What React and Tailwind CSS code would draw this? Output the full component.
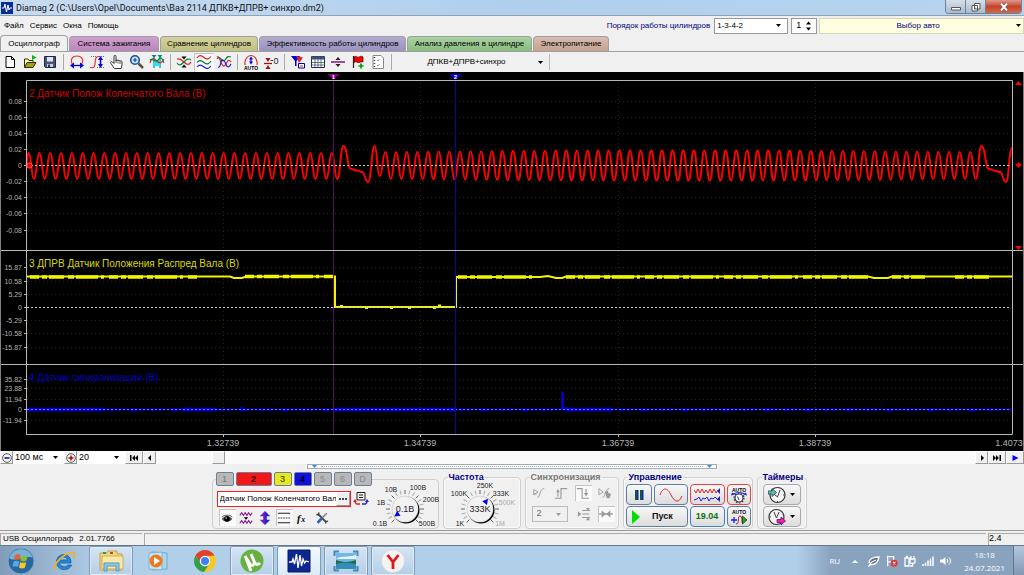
import React from 'react';

const TABS = [
    { label: 'Осциллограф', cls: 'w-[68px] h-4 bg-[#f0f0f0]' },
    { label: 'Система зажигания', cls: 'w-[90px] h-[15px] bg-gradient-to-b from-[#cfa0cf] to-[#bb85bb]' },
    { label: 'Сравнение цилиндров', cls: 'w-[98px] h-[15px] bg-gradient-to-b from-[#d3d3a0] to-[#bfbf7e]' },
    { label: 'Эффективность работы цилиндров', cls: 'w-[147px] h-[15px] bg-gradient-to-b from-[#b3abd0] to-[#9a92bd]' },
    { label: 'Анализ давления в цилиндре', cls: 'w-[125px] h-[15px] bg-gradient-to-b from-[#a9d3a2] to-[#88bd80]' },
    { label: 'Электропитание', cls: 'w-[76px] h-[15px] bg-gradient-to-b from-[#d8bdb0] to-[#c3a292]' },
];

const V_GRID = [223, 420, 618, 815];

const Y_LABELS = [
    [101, '0.08'], [117, '0.06'], [133, '0.04'], [149, '0.02'], [165, '0'], [181, '-0.02'], [197, '-0.04'], [213, '-0.06'], [230, '-0.08'],
    [267, '15.87'], [281, '10.58'], [294, '5.29'], [307, '0'], [320, '-5.29'], [333, '-10.58'], [347, '-15.87'],
    [379, '35.82'], [388, '23.88'], [399, '11.94'], [409, '0'], [420, '-11.94'],
];

// Peaks and troughs of the crankshaft signal, 58 teeth and a two-tooth gap
function crankExtrema() {
    const pts = [[26, 166]];
    for (let i = 0; i <= 28; i++) {
        const x = 28.6 + i * 10.83;
        pts.push([x, 153], [x + 5.3, 179]);
    }
    pts.push([343.5, 146], [351, 169], [357, 170.5], [362, 172], [368, 182], [374.7, 146], [379.6, 176]);
    for (let i = 0; i <= 55; i++) {
        const x = 385.5 + i * 10.633;
        const swell = Math.sin((Math.PI * i) / 55) * 1.5;
        pts.push([x, 152 - swell], [x + 5.3, 179 + swell]);
    }
    pts.push([981.5, 146], [989, 169], [994, 170.5], [1000, 172], [1006, 182], [1012, 148]);
    return pts;
}

function smoothPath(pts) {
    let d = `M${pts[0][0]} ${pts[0][1]}`;
    for (let i = 1; i < pts.length; i++) {
        const [x0, y0] = pts[i - 1];
        const [x1, y1] = pts[i];
        const m = ((x0 + x1) / 2).toFixed(1);
        d += `C${m} ${y0} ${m} ${y1.toFixed(1)} ${x1.toFixed(1)} ${y1.toFixed(1)}`;
    }
    return d;
}

function Chart() {
    return (
        <svg viewBox="0 72 1024 379" className="block w-full bg-black" fontFamily="Liberation Sans, Arial, sans-serif">
            <g stroke="#26260a" strokeDasharray="1 3">
                {Y_LABELS.map(([y]) => <path key={y} d={`M27 ${y + 0.5}H1011`} />)}
                {V_GRID.map((x) => <path key={x} d={`M${x + 0.5} 83V434`} />)}
            </g>

            <path d={smoothPath(crankExtrema())} fill="none" stroke="#ff0000" strokeWidth="2" />
            <path d="M27 276.5H230L234 278H242L246 276.5H335V307H456V277H540L548 276L556 278H562L566 276.5H868L874 278H888L892 276.5H1012" fill="none" stroke="#f4f400" strokeWidth="2" />
            <path d="M30 277H200M245 276.5H333M458 277H536M566 277H868M892 277H925M955 277H990" stroke="#f4f400" strokeWidth="3.5" strokeDasharray="9 3 5 2 15 4 6 2 22 3 3 5" />
            <path d="M340 306.5H343M365 307.5H368M390 307.5H393M408 307.5H411M433 307.5H436M438 306H441" stroke="#f4f400" strokeWidth="3" />
            <path d="M27 409.5H1012" stroke="#0000f0" strokeWidth="1.6" />
            <path d="M27 409.5H105M182 409.5H216M333 409.5H455M566 409.5H612" stroke="#0000f0" strokeWidth="3.5" strokeDasharray="11 1 6 1" />
            <path d="M110 410H180M220 410H330M460 410H560M620 410H1010" stroke="#0000f0" strokeWidth="2.5" strokeDasharray="3 5 2 11 6 4 1 9" />
            <path d="M241.5 409V406" stroke="#0000ff" strokeWidth="1.5" />
            <path d="M562.5 410V392M563 408.5H569" stroke="#0000ff" strokeWidth="2" />
            <g stroke="#c8c8c8" strokeDasharray="2 2">
                <path d="M27 165.5H1011" />
                <path d="M27 307.5H1011" />
                <path d="M27 409.5H1011" strokeOpacity=".6" />
            </g>
            <path d="M333.5 80V434" stroke="#5a0a60" />
            <path d="M455.5 80V434" stroke="#1400a0" />

            <g stroke="#b8b8b8" fill="none">
                <path d="M26.5 434.5V80.5H1012.5V434.5H26" />
                <path d="M0 250.5H1024M0 364.5H1024" />
                <path d="M.5 72V451M1023.5 72V451" stroke="#808080" />
                {Y_LABELS.map(([y]) => <path key={y} d={`M24 ${y + 0.5}H26`} />)}
                {V_GRID.map((x) => <path key={x} d={`M${x + 0.5} 434V437`} />)}
            </g>
            <g fontSize="7" fill="#b4b4b4" textAnchor="end">
                {Y_LABELS.map(([y, t]) => <text key={y} x="22" y={y + 3}>{t}</text>)}
            </g>
            <g fontSize="9" fill="#b4b4b4" textAnchor="middle">
                <text x="223" y="446">1.32739</text>
                <text x="420" y="446">1.34739</text>
                <text x="618" y="446">1.36739</text>
                <text x="815" y="446">1.38739</text>
                <text x="1009" y="446">1.4073</text>
            </g>
            <g fontSize="10">
                <text x="29" y="97" fill="#d00000">2 Датчик Полож Коленчатого Вала (В)</text>
                <text x="29" y="267" fill="#d8d800">3 ДПРВ Датчик Положения Распред Вала (В)</text>
                <text x="29" y="381" fill="#0000c0">4 Датчик синхронизации (В)</text>
            </g>

            <path d="M327.5 74H339.5L333.5 80Z" fill="#800080" />
            <path d="M449.5 74H461.5L455.5 80Z" fill="#0000ff" />
            <g fontSize="6" fontWeight="bold" fill="#fff" textAnchor="middle">
                <text x="333.5" y="79">1</text>
                <text x="455.5" y="79">2</text>
            </g>
            <circle cx="29.5" cy="165.5" r="2.7" fill="#ff0000" stroke="#ff8080" strokeWidth=".6" />
            <path d="M1015 85L1018.5 81L1022 85ZM1018.5 162L1021.5 165L1018.5 168L1015.5 165ZM1015 246H1022L1018.5 250Z" fill="#ff0000" />
        </svg>
    );
}

/* ---------- small drawings ---------- */

function Svg({ size = 'size-4', children, box = '0 0 16 16' }) {
    return <svg viewBox={box} className={`${size} shrink-0`} fill="none" aria-hidden="true">{children}</svg>;
}

function Down({ color = '#000' }) {
    return <svg viewBox="0 0 5 3" className="w-[5px] h-[3px] shrink-0" aria-hidden="true"><path d="M0 0H5L2.5 3Z" fill={color} /></svg>;
}

const TOOL_GROUPS = [
    [
        ['Новый', <Svg><path d="M4 2.5H9.5L12.5 5.5V13.5H4Z" fill="#fff" stroke="#000" /><path d="M9.5 2.5V5.5H12.5" stroke="#000" /></Svg>],
        ['Открыть', <Svg><path d="M2.5 13V5H6L7 6.5H11V8" fill="#ffffa0" stroke="#303000" /><path d="M2.5 13.5L5 8.5H14L11 13.5Z" fill="#a0a020" stroke="#303000" /><path d="M10 1L14.5 3.5L10 6Z" fill="#00c000" /></Svg>],
        ['Сохранить', <Svg><path d="M2.5 2.5H13.5V13.5H3.5L2.5 12.5Z" fill="#4a5578" stroke="#202840" /><path d="M5 3H11V7.5H5Z" fill="#e0e4f0" /><path d="M5 10H11V13H5Z" fill="#c8ccd8" /><path d="M6 10.5H8V13H6Z" fill="#303850" /></Svg>],
    ],
    [
        ['Масштаб по X', <Svg><path d="M3.5 10.5C.5 5 4 2 8 2S15.5 5 12.5 10.5" stroke="#f03030" strokeWidth="1.2" /><path d="M3 11.5H13" stroke="#0000e0" strokeWidth="1.3" /><path d="M1 11.5L5 8.5V14.5ZM15 11.5L11 8.5V14.5Z" fill="#0000e0" /></Svg>],
        ['Масштаб по Y', <Svg><path d="M1 13.5H4C8 13 4 3 9 2.5H10" stroke="#f03030" strokeWidth="1.2" /><path d="M2 2.5H7M8 13.5H15M10 2.5H15" stroke="#666" strokeDasharray="1 1" /><path d="M11.5 4V12" stroke="#0000e0" strokeWidth="1.5" /><path d="M11.5 2L14 6H9ZM11.5 14L14 10H9Z" fill="#0000e0" /></Svg>],
        ['Перемещение', <Svg><path d="M5 14L2 9.5C1 8 2.5 7 3.5 8L5 9.5V2.5C5 1 7 1 7 2.5V7C7 5.5 9 5.5 9 7C9 6 11 6 11 7.5C11 6.5 13 6.5 13 8V11L12 14.5H5.5Z" fill="#fff" stroke="#202020" strokeWidth=".9" /><path d="M7 7V9M9 7.5V9.5M11 8V10" stroke="#202020" strokeWidth=".8" /></Svg>],
        ['Лупа', <Svg><circle cx="6" cy="6" r="4.3" fill="#c8e4ff" stroke="#205090" strokeWidth="1.6" /><path d="M4 6H8M6 4V8" stroke="#1040c0" strokeWidth="1.2" /><path d="M9.5 9.5L14 14" stroke="#5a5040" strokeWidth="2.5" /></Svg>],
        ['Маркеры', <Svg><path d="M5 3V14M11 3V14" stroke="#00b8c8" strokeWidth="1.5" /><path d="M5 6H11V12H5Z" fill="#30e0e8" /><path d="M1 9C3 3 5 4 8 7S13 9 15 5" stroke="#e02020" strokeWidth="1.1" /><path d="M1 6C4 3 6 10 9 6S13 4 15 9" stroke="#008030" strokeWidth="1.1" /><path d="M2.5 1H7.5L5 4ZM8.5 1H13.5L11 4Z" fill="#008890" /></Svg>],
    ],
    [
        ['Сжать', <Svg><path d="M1 5C4 4 6 6 8 8S13 12 15 8" stroke="#e02020" strokeWidth="1.2" /><path d="M1 9C3 12 5 11 8 8S12 4 15 6" stroke="#008030" strokeWidth="1.2" /><path d="M8 5.5L5.5 2.5H10.5ZM8 10.5L5.5 13.5H10.5Z" fill="#000" /></Svg>],
        ['Разнести', <Svg><path d="M1 4C3 1 5 1 8 3.5S13 5 15 2.5" stroke="#e02020" strokeWidth="1.2" /><path d="M1 8.5C3 6 5 6 8 8.5S13 10 15 7" stroke="#008030" strokeWidth="1.2" /><path d="M1 13C3 10.5 5 10.5 8 13S13 14.5 15 12" stroke="#2020f0" strokeWidth="1.2" /></Svg>, true],
        ['Наложить', <Svg><path d="M1 5C4 0 6 10 9 6S12 2 15 3" stroke="#008030" strokeWidth="1.2" /><path d="M1 3C4 1 5 13 8 12S11 3 15 8" stroke="#e02020" strokeWidth="1.2" /><path d="M2 13C5 15 4 5 7 6S10 13 12 13S14 11 15 10" stroke="#2020f0" strokeWidth="1.2" /></Svg>],
    ],
    [
        ['Авто', <Svg><path d="M2 11C1 5 5 1.5 8 1.5S15 5 14 11" stroke="#e02020" strokeWidth="1.1" /><path d="M8 4V9" stroke="#0000d0" strokeWidth="1.2" /><path d="M8 2.5L10 5.5H6ZM8 10.5L10 7.5H6Z" fill="#0000d0" /><text x="8" y="15.5" textAnchor="middle" fontSize="5" fontWeight="bold" fill="#000" fontFamily="Liberation Sans">AUTO</text></Svg>],
        ['Ноль', <Svg><path d="M1 9.5H9" stroke="#a01010" strokeWidth="1.3" /><path d="M2.5 4H7.5L5 8ZM2.5 15H7.5L5 11Z" fill="#a01010" /><path d="M7.5 6.5H10" stroke="#444" /><text x="10.5" y="9.5" fontSize="9" fill="#222" fontFamily="Liberation Sans">0</text></Svg>],
    ],
    [
        ['Фильтр', <Svg><path d="M1 2H10L6.5 7V12H5V7Z" fill="#0000e0" /><path d="M6 2L13 3.5L9 9Z" fill="#e02020" /><path d="M8.5 9.5H14.5V14H8.5Z" fill="#fff" stroke="#0000a0" /><path d="M10 12H13" stroke="#e02020" /></Svg>],
        ['Таблица', <Svg><path d="M1.5 2.5H14.5V13.5H1.5Z" fill="#fff" stroke="#203050" /><path d="M1.5 4H14.5" stroke="#405880" strokeWidth="3" /><path d="M5 3V13M8 3V13M11 3V13M2 8.5H14M2 11H14" stroke="#304060" strokeWidth=".7" /></Svg>],
        ['Разделить', <Svg><path d="M1 8H15" stroke="#800080" strokeWidth="1.4" /><path d="M8 3L10.5 6H5.5ZM8 13L10.5 10H5.5Z" fill="#222" /></Svg>],
        ['Флаг', <Svg><path d="M3.5 2V14" stroke="#222" strokeWidth="1.2" /><path d="M4 3C6 1 7 4 9 3S12 2 13 3V8C11 7 10 9 8 8.5S6 7 4 8.5Z" fill="#f00000" stroke="#600" strokeWidth=".7" /><path d="M11 9.5V14.5M8.5 12H13.5" stroke="#00a000" strokeWidth="1.7" /></Svg>],
        ['Отчёт', <Svg><path d="M3 1.5H11L13.5 4V14.5H3Z" fill="#fff" stroke="#888" /><path d="M4.5 3V14" stroke="#444" strokeDasharray="1 2" strokeWidth="1.5" /><path d="M7 6L8 7L9.5 5M7 11L8 12L9.5 10" stroke="#888" strokeWidth=".8" /></Svg>],
    ],
];

const CHANNELS = [
    ['1', 'w-[18px] bg-[#b8b8b8] text-[#777]'],
    ['2', 'w-9 bg-[#f01818] text-[#300] font-bold'],
    ['3', 'w-[18px] bg-[#e8e820] text-[#330]'],
    ['4', 'w-[18px] bg-[#1010e0] text-black font-bold'],
    ['5', 'w-[18px] bg-[#b8b8b8] text-[#888]'],
    ['6', 'w-[18px] bg-[#b8b8b8] text-[#888]'],
    ['D', 'w-[18px] bg-[#b8b8b8] text-[#888]'],
];

const CHANNEL_TOOLS = [
    ['Видимость', <Svg size="size-3.5"><path d="M2 9C5 5 11 5 14 9C11 13 5 13 2 9Z" fill="#555" /><circle cx="8" cy="9" r="3.2" fill="#000" /><path d="M2 7C5 4 11 4 14 7" stroke="#444" /><circle cx="7" cy="8" r=".8" fill="#fff" /></Svg>, true],
    ['Инверсия', <Svg size="size-3.5"><path d="M1 5L3 2L5 5L7 2L9 5L11 2L13 5L15 2M1 14L3 11L5 14L7 11L9 14L11 11L13 14L15 11" stroke="#902090" strokeWidth="1.3" /><path d="M5.5 7H10.5L8 10Z" fill="#000" /></Svg>],
    ['Смещение', <Svg size="size-3.5"><path d="M8 0L14 6H10V10H14L8 16Z" fill="#2020e0" /><path d="M8 0L2 6H6V10H2L8 16Z" fill="#7020b0" /></Svg>],
    ['Линии', <Svg size="size-3.5"><path d="M1 2.5H15M1 13.5H15" stroke="#222" strokeWidth="1.2" /><path d="M1 8H15" stroke="#222" strokeDasharray="2 1" /></Svg>, true],
    ['Функция', <Svg size="size-3.5"><text x="1" y="12" fontSize="12" fontStyle="italic" fontWeight="bold" fontFamily="Liberation Serif" fill="#000">f</text><text x="6" y="13" fontSize="9" fontStyle="italic" fontWeight="bold" fontFamily="Liberation Serif" fill="#000">x</text></Svg>],
    ['Настройка', <Svg size="size-3.5"><path d="M3 3L13 13" stroke="#444" strokeWidth="2.2" /><path d="M13.5 2.5L8 8" stroke="#777" strokeWidth="1.6" /><path d="M8 8L3 13.5" stroke="#3060b0" strokeWidth="3" /><path d="M1.5 4L4 4.5L4.5 1.5M12 14.5L12.5 12L15 11.5" stroke="#444" strokeWidth="1.5" /></Svg>],
];

function Knob({ value, angle, labels, label }) {
    const ticks = Array.from({ length: 19 }, (_, i) => -135 + i * 15);
    return (
        <svg viewBox="0 6 72 42" className="w-[72px] h-[42px] shrink-0 overflow-visible" fontFamily="Liberation Sans, Arial, sans-serif" role="img" aria-label={label}>
            {ticks.map((a, i) => <path key={a} d="M36 14V10" stroke={i % 3 ? '#aaa' : '#555'} strokeWidth=".9" transform={`rotate(${a} 36 29)`} />)}
            <circle cx="37" cy="30" r="13.5" fill="#000" />
            <circle cx="36" cy="29" r="13.3" fill="#d0d0d0" />
            <circle cx="36" cy="29" r="12.6" fill="#f2f2f2" />
            <path d="M36 16L39 21.5H33Z" fill="#0000f0" transform={`rotate(${angle} 36 29)`} />
            <text x="36" y="32" fontSize="9" textAnchor="middle" fill="#222">{value}</text>
            <g fontSize="7" textAnchor="middle">
                {labels.map(([x, y, t, dim]) => <text key={t} x={x} y={y} fill={dim ? '#aaa' : '#222'}>{t}</text>)}
            </g>
        </svg>
    );
}

const RANGE_LABELS = [[11, 46, '0.1В'], [12, 25, '1В'], [22, 12, '10В'], [49, 10, '100В'], [62, 22, '200В'], [58, 46, '500В']];
const FREQ_LABELS = [[16, 46, '1K'], [15, 16, '100K'], [41, 8, '250K'], [57, 16, '333K'], [63, 25, '500K', true], [56, 46, '1M', true]];

const SYNC_TOP = [
    ['Спад', <Svg size="size-3.5"><path d="M1 9H5M6 13C10 13 8 3 14 3M2 4L7 7L2 10Z" stroke="#999" /></Svg>],
    ['Фронт вверх', <Svg size="size-3.5"><path d="M1 14H8V3H15M4.5 12V5" stroke="#999" strokeWidth="1.3" /><path d="M2.5 7L4.5 3L6.5 7Z" fill="#999" /></Svg>],
    ['Фронт вниз', <Svg size="size-3.5"><path d="M1 3H7V14H15M11.5 3V10" stroke="#999" strokeWidth="1.3" /><path d="M9 8H14L11.5 12Z" fill="#999" /></Svg>, true],
    ['Ручная', <Svg size="size-3.5"><path d="M1 3L6 7L1 10ZM5 13C9 13 7 3 13 3" stroke="#999" /><path d="M8 7L11 5L12 8L15 9L13 14H10Z" fill="#999" /></Svg>],
];

const SYNC_BOTTOM = [
    ['Уровень', <Svg size="size-3.5"><path d="M6 4H15M6 8H14M6 12H15" stroke="#999" strokeWidth="1.3" /><path d="M1 5L5 8L1 11ZM10 1H15L12.5 4ZM10 15H15L12.5 12Z" fill="#999" /></Svg>],
    ['По центру', <Svg size="size-3.5"><path d="M0 8H16" stroke="#999" strokeWidth="1.5" /><path d="M3 4L8 8L3 12ZM13 4L8 8L13 12Z" fill="#999" /></Svg>, true],
];

function Group({ title, className = '', dim, children }) {
    return (
        <fieldset className={`h-[57px] min-w-0 rounded-sm border border-[#cfcfcf] shadow-[inset_0_0_0_1px_#fafafa] ${className}`}>
            <legend className={`ml-1 h-2.5 px-px text-[9px] leading-[10px] font-bold ${dim ? 'text-[#777]' : 'text-[#000080]'}`}>{title}</legend>
            {children}
        </fieldset>
    );
}

function IconButton({ name, icon, on, className = '' }) {
    return (
        <button type="button" aria-label={name} className={`flex items-center justify-center ${on ? 'bg-[#fafafa] shadow-[inset_1px_1px_0_#c4c4c4]' : ''} ${className}`}>
            {icon}
        </button>
    );
}

function Picker({ name, value, className = '', selectClass = '', arrow = '#000' }) {
    return (
        <div className={`grid items-center ${className}`}>
            <select aria-label={name} defaultValue={value} className={`col-start-1 row-start-1 h-full w-full appearance-none outline-none ${selectClass}`}>
                <option>{value}</option>
            </select>
            <span className="pointer-events-none col-start-1 row-start-1 mr-1.5 justify-self-end"><Down color={arrow} /></span>
        </div>
    );
}

function TitleBar() {
    return (
        <div className="flex h-4 items-center bg-gradient-to-r from-[#c8dcf0] via-[#b0cfec] to-[#b8d4ee] border-b border-[#93a2b2]">
            <svg viewBox="0 0 12 12" className="ml-px size-3 shrink-0"><path d="M0 0H12V12H0Z" fill="#0c2aa0" /><path d="M1 6H3L4 2L5.5 10L7 3L8 8L9 6H11" fill="none" stroke="#fff" /></svg>
            <h1 className="ml-[3px] flex-1 whitespace-nowrap font-[Roboto,sans-serif] text-[9px] leading-4 text-[#111]">Diamag 2 (C:\Users\Opel\Documents\Ваз 2114 ДПКВ+ДПРВ+ синхро.dm2)</h1>
            <div className="mr-0.5 flex h-[14px] self-start overflow-hidden rounded-b border border-t-0 border-[#6f8296]">
                <button type="button" aria-label="Свернуть" className="flex w-5 items-center justify-center border-r border-[#6f8296] bg-gradient-to-b from-[#d6e0ea] to-[#a9bbcd]">
                    <Svg size="size-2.5" box="0 0 10 10"><path d="M.5 5.5H9.5V8H.5Z" fill="#fff" stroke="#555" /></Svg>
                </button>
                <button type="button" aria-label="Восстановить" className="flex w-5 items-center justify-center border-r border-[#6f8296] bg-gradient-to-b from-[#d6e0ea] to-[#a9bbcd]">
                    <Svg size="size-2.5" box="0 0 10 10"><path d="M3.5 1.5H9V7H3.5ZM1 3.5H6.5V9H1Z" fill="#fff" stroke="#555" /><path d="M3 5.5H4.5V7H3Z" fill="#555" /></Svg>
                </button>
                <button type="button" aria-label="Закрыть" className="flex w-[35px] items-center justify-center bg-gradient-to-b from-[#dc9a8c] via-[#c6432b] to-[#cf6a4a]">
                    <Svg size="size-2.5" box="0 0 10 10"><path d="M2 1.5L8 8.5M8 1.5L2 8.5" stroke="#633" strokeWidth="3" /><path d="M2 1.5L8 8.5M8 1.5L2 8.5" stroke="#fff" strokeWidth="2" /></Svg>
                </button>
            </div>
        </div>
    );
}

function MenuBar() {
    return (
        <div className="flex h-[19px] items-center">
            <nav className="flex flex-1 gap-1.5 pl-1 text-[8px]">
                {['Файл', 'Сервис', 'Окна', 'Помощь'].map((m) => <button type="button" key={m}>{m}</button>)}
            </nav>
            <span className="mr-1 text-[8px] text-[#000080]">Порядок работы цилиндров</span>
            <Picker name="Порядок работы цилиндров" value="1-3-4-2" className="h-4 w-[74px] border border-[#999] bg-white" selectClass="pl-0.5 text-[8px]" />
            <div className="ml-[3px] flex h-4 w-[26px] items-center border border-[#999] bg-white">
                <input type="text" aria-label="Номер цилиндра" defaultValue="1" className="w-3.5 pl-1 text-[9px] outline-none" />
                <svg viewBox="0 0 5 10" className="h-2.5 w-[5px]"><path d="M0 3.5L2.5 .5L5 3.5ZM0 6.5H5L2.5 9.5Z" /></svg>
            </div>
            <button type="button" className="ml-0.5 flex h-4 w-1/5 items-center border border-[#d8d8b8] bg-[#ffffe0] pr-0.5 text-[8px] text-[#000080]">
                <span className="flex-1">Выбор авто</span>
                <Down />
            </button>
        </div>
    );
}

function Toolbar() {
    return (
        <div className="flex h-[21px] items-center border-t border-[#a0a0a0] bg-[#f0f0f0]">
            {TOOL_GROUPS.map((group, i) => (
                <div key={i} className="flex items-center">
                    {group.map(([name, icon, on]) => <IconButton key={name} name={name} icon={icon} on={on} className="h-[19px] w-5" />)}
                    <span className="mx-[3px] h-4 w-px bg-[#aaa]" />
                </div>
            ))}
            <button type="button" className="flex h-full w-[154px] items-center pr-1.5 text-[8px]">
                <span className="flex-1">ДПКВ+ДПРВ+синхро</span>
                <Down />
            </button>
            <span className="h-4 w-px bg-[#bbb]" />
        </div>
    );
}

const SCROLL_BTN = 'flex h-[13px] items-center justify-center border border-[#999] border-t-white border-l-white bg-[#f0f0f0]';

function ScrollRow() {
    return (
        <div className="flex h-[13px] items-center bg-white text-[9px]">
            <button type="button" aria-label="Уменьшить" className={`${SCROLL_BTN} w-[13px]`}><Svg size="size-2.5" box="0 0 10 10"><circle cx="5" cy="5" r="4.3" fill="#fff" stroke="#555" /><path d="M2.5 5H7.5" stroke="#0000c0" strokeWidth="1.5" /></Svg></button>
            <Picker name="Развёртка" value="100 мс" className="h-[13px] w-[51px]" selectClass="pl-0.5 leading-[13px]" />
            <button type="button" aria-label="Увеличить" className={`${SCROLL_BTN} w-[13px]`}><Svg size="size-2.5" box="0 0 10 10"><circle cx="5" cy="5" r="4.3" fill="#fff" stroke="#555" /><path d="M2.5 5H7.5M5 2.5V7.5" stroke="#c00000" strokeWidth="1.5" /></Svg></button>
            <Picker name="Масштаб" value="20" className="h-[13px] w-12" selectClass="pl-0.5 leading-[13px]" />
            <button type="button" aria-label="В начало" className={`${SCROLL_BTN} w-[18px]`}><Svg size="size-2.5" box="0 0 10 10"><path d="M1 2H2.5V8H1ZM3 5L6 2V8ZM6 5L9 2V8Z" fill="#000" /></Svg></button>
            <button type="button" aria-label="Назад" className={`${SCROLL_BTN} w-[13px]`}><Svg size="size-2" box="0 0 8 8"><path d="M2 4L5 1V7Z" fill="#000" /></Svg></button>
            <div className="h-[13px] flex-1 bg-[#fafafa] pl-[5.5%]">
                <div className={`${SCROLL_BTN} w-[13px]`} />
            </div>
            <button type="button" aria-label="Вперёд" className={`${SCROLL_BTN} w-[13px]`}><Svg size="size-2" box="0 0 8 8"><path d="M6 4L3 1V7Z" fill="#000" /></Svg></button>
            <button type="button" aria-label="В конец" className={`${SCROLL_BTN} w-[18px]`}><Svg size="size-2.5" box="0 0 10 10"><path d="M1 2L4 5L1 8ZM4 2L7 5L4 8ZM7.5 2H9V8H7.5Z" fill="#000" /></Svg></button>
            <button type="button" aria-label="Воспроизвести" className={`${SCROLL_BTN} w-[18px]`}><Svg size="size-2" box="0 0 8 8"><path d="M1.5 1L7.5 4L1.5 7Z" fill="#0000ff" /></Svg></button>
        </div>
    );
}

function ChannelGroup() {
    return (
        <fieldset className="h-[57px] w-[227px] min-w-0 rounded-sm border border-[#cfcfcf]">
            <legend className="ml-[3px] flex h-3.5 gap-0.5">
                {CHANNELS.map(([n, cls]) => (
                    <button type="button" key={n} className={`h-3.5 rounded-xs border border-[#6c8199] text-[9px] leading-3 ${cls}`}>{n}</button>
                ))}
            </legend>
            <div className="flex h-11 pl-1">
                <div className="flex w-[154px] flex-col gap-0.5 pt-[5px]">
                    <div className="flex items-center">
                        <div className="flex h-4 w-[134px] items-center border border-[#f02020] bg-white">
                            <input type="text" aria-label="Имя канала" defaultValue="Датчик Полож Коленчатого Вала" className="min-w-0 flex-1 pl-0.5 text-[8px] outline-none" />
                            <button type="button" aria-label="Выбрать датчик" className="flex h-3.5 w-3.5 items-center justify-center border border-[#999] border-t-white border-l-white bg-[#f0f0f0]">
                                <Svg size="size-2" box="0 0 8 8"><path d="M0 4H2M3 4H5M6 4H8" stroke="#111" strokeWidth="1.5" /></Svg>
                            </button>
                        </div>
                        <IconButton
                            name="Поменять каналы"
                            className="ml-0.5 h-4 w-4"
                            icon={<Svg><path d="M4 1.5H12V9H4Z" fill="#eee" stroke="#222" /><path d="M6 4H10M6 6.5H10" stroke="#222" /><path d="M2 10C2 14 5 13 7 13" stroke="#e02020" strokeWidth="1.5" /><path d="M14 10C14 14 11 13 9 13" stroke="#2020e0" strokeWidth="1.5" /><path d="M0 11L2 8L4 11Z" fill="#e02020" /><path d="M12 11L14 8L16 11Z" fill="#2020e0" /></Svg>}
                        />
                    </div>
                    <div className="flex gap-0.5 pl-0.5">
                        {CHANNEL_TOOLS.map(([name, icon, on]) => <IconButton key={name} name={name} icon={icon} on={on} className="h-[17px] w-[17px]" />)}
                    </div>
                </div>
                <Knob value="0.1В" angle={-125} labels={RANGE_LABELS} label="Диапазон" />
            </div>
        </fieldset>
    );
}

const PANEL_BTN = 'flex h-[21px] items-center justify-center rounded-sm border bg-gradient-to-b from-[#f8f8f8] to-[#dcdcdc]';

function ControlPanel() {
    return (
        <div className="border-b border-[#999] bg-[#f0f0f0]">
            <div className="flex justify-center">
                <div className="flex h-[5px] w-2/5 items-center justify-between border border-[#aaa] bg-white px-1">
                    <svg viewBox="0 0 5 3" className="h-[3px] w-[5px]"><path d="M0 0H5L2.5 3Z" fill="#2090f0" /></svg>
                    <span className="mx-1 flex-1 border-t border-dotted border-[#80bce8]" />
                    <svg viewBox="0 0 5 3" className="h-[3px] w-[5px]"><path d="M0 0H5L2.5 3Z" fill="#2090f0" /></svg>
                </div>
            </div>
            <div className="flex items-start justify-center gap-1 pt-[3px] pr-1.5 pb-px">
                <ChannelGroup />
                <Group title="Частота" className="w-[78px]">
                    <div className="pt-1">
                        <Knob value="333K" angle={38} labels={FREQ_LABELS} label="Частота" />
                    </div>
                </Group>
                <Group title="Синхронизация" dim className="w-[94px]">
                    <div className="flex gap-[5px] pl-[5px] pt-[3px]">
                        {SYNC_TOP.map(([name, icon, on]) => <IconButton key={name} name={name} icon={icon} on={on} className="h-4 w-[17px]" />)}
                    </div>
                    <div className="flex items-center pl-1.5 pt-[5px]">
                        <Picker name="Канал синхронизации" value="2" arrow="#999" className="mr-2 h-4 w-9 border border-[#bbb]" selectClass="pl-1 text-[9px] text-[#666]" />
                        <div className="flex gap-[5px]">
                            {SYNC_BOTTOM.map(([name, icon, on]) => <IconButton key={name} name={name} icon={icon} on={on} className="h-4 w-[17px]" />)}
                        </div>
                    </div>
                </Group>
                <Group title="Управление" className="w-[130px]">
                    <div className="grid grid-cols-[26px_34px_35px_24px] gap-x-0.5 gap-y-px px-0.5 pt-0.5">
                        <button type="button" aria-label="Пауза" className={`${PANEL_BTN} border-[#5e7f9f]`}><Svg size="size-3" box="0 0 12 12"><path d="M2 1H5V11H2ZM7 1H10V11H7Z" fill="#0a6030" /><path d="M4 1H5.5V11H4ZM9 1H10.5V11H9Z" fill="#2020c0" /></Svg></button>
                        <button type="button" aria-label="Синус" className={`${PANEL_BTN} border-[#5e7f9f]`}><svg viewBox="0 0 24 16" className="h-4 w-6" fill="none"><path d="M1 8C4 0 8 0 12 8S20 16 23 9" stroke="#e02020" /></svg></button>
                        <button type="button" aria-label="Два сигнала" className={`${PANEL_BTN} border-[#f04040]`}><svg viewBox="0 0 26 16" className="h-4 w-[26px]" fill="none"><path d="M0 3L2 6L4 2L6 6L8 2L10 6L12 3L14 6L16 2L18 6L20 2L22 6L24 3" stroke="#e02020" /><path d="M0 13L3 12L5 10L7 14L9 11L11 12L13 10L15 14L17 11L19 12L21 10L24 13" stroke="#2020e0" /><path d="M26 1V7L23 4ZM26 9V15L23 12Z" fill="#2020c0" /></svg></button>
                        <button type="button" aria-label="Автонастройка" className={`${PANEL_BTN} border-[#f04040]`}><Svg size="size-[18px]" box="0 0 18 18"><text x="9" y="5.5" fontSize="5" fontWeight="bold" textAnchor="middle" fill="#000" fontFamily="Liberation Sans">AUTO</text><circle cx="9" cy="12" r="4" fill="#fff" stroke="#333" strokeWidth="1.2" /><circle cx="9" cy="12" r="5" stroke="#333" strokeDasharray="1.5 1.6" strokeWidth="1.2" /><path d="M9 14L7.5 10.5" stroke="#2020e0" /><path d="M3 8.5C5 6 13 6 15 8.5" stroke="#2020e0" /><path d="M1 9.5L2 6.5L5 8.5ZM17 9.5L16 6.5L13 8.5Z" fill="#2020e0" /></Svg></button>
                        <button type="button" className={`${PANEL_BTN} col-span-2 gap-3 border-[#5e7f9f] pr-2 text-[9px] font-bold text-[#111]`}>
                            <svg viewBox="0 0 8 14" className="h-3.5 w-2"><path d="M0 0L8 7L0 14Z" fill="#00e000" /></svg>
                            Пуск
                        </button>
                        <button type="button" className={`${PANEL_BTN} border-[#4080d0] text-[9px] font-bold text-[#107010]`}>19.04</button>
                        <button type="button" aria-label="Автопуск" className={`${PANEL_BTN} border-[#5e7f9f]`}><Svg size="size-[18px]" box="0 0 18 18"><text x="9" y="5.5" fontSize="5" fontWeight="bold" textAnchor="middle" fill="#000" fontFamily="Liberation Sans">AUTO</text><path d="M6 16C10 16 7 8 10 8S11 15 13 16" stroke="#a02020" /><path d="M1 12H7M4 9V15" stroke="#2020e0" strokeWidth="1.3" /><path d="M12.5 8L17 12L12.5 16Z" fill="#10b010" stroke="#222" strokeWidth=".7" /></Svg></button>
                    </div>
                </Group>
                <Group title="Таймеры" className="w-[50px]">
                    <div className="flex flex-col gap-px px-[5px] pt-0.5">
                        <button type="button" aria-label="Таймер запуска" className={`${PANEL_BTN} gap-1 border-[#aaa]`}><Svg size="size-[18px]" box="0 0 18 18"><circle cx="9.5" cy="9" r="7.5" fill="#f4f4f4" stroke="#333" strokeWidth="1.2" /><path d="M9.5 11L12 4M9.5 11L6 8M15 9H16M9.5 15V16" stroke="#444" /><path d="M0 5H4V2.5L8.5 6.5L4 10.5V8H0Z" fill="#60b8b8" stroke="#204848" strokeWidth=".8" /></Svg><Down /></button>
                        <button type="button" aria-label="Таймер остановки" className={`${PANEL_BTN} gap-1 border-[#aaa]`}><Svg size="size-[18px]" box="0 0 18 18"><circle cx="8.5" cy="9" r="7.5" fill="#f4f4f4" stroke="#333" strokeWidth="1.2" /><path d="M8.5 10L11 4M8.5 10L6 4M2 9H3" stroke="#444" /><path d="M9 11.5H13V9L17.5 13L13 17V14.5H9Z" fill="#f020c0" stroke="#601050" strokeWidth=".8" /></Svg><Down /></button>
                    </div>
                </Group>
            </div>
        </div>
    );
}

function StatusBar() {
    return (
        <div className="flex h-[15px] items-center gap-0.5 border-b border-[#66788a] bg-[#f0f0f0] pt-px text-[9px]">
            <div className="flex h-3 w-[142px] items-center gap-1.5 border-t border-l border-[#aaa] pl-0.5 whitespace-nowrap"><span className="text-[8px]">USB Осциллограф</span><span className="text-[8px]">2.01.7766</span></div>
            <div className="h-3 flex-1 border-t border-l border-[#aaa]" />
            <div className="flex h-3 w-9 items-center border-t border-l border-[#aaa]">2.4</div>
        </div>
    );
}

const APPS = [
    ['Internet Explorer', <svg viewBox="0 0 24 24" className="size-6"><path d="M19 14H7.5C8 18 14 19 16 16H19.5C17 23 4.5 22 4.5 13C4.5 3 19.5 3 19 14ZM7.8 11H15.5C15 7 8.5 7 7.8 11Z" fill="#2488d8" stroke="#0c50a0" strokeWidth=".7" /><path d="M3 21C-1 17 14 1 22 4C23.5 5 22 8 21 9" fill="none" stroke="#f0b020" strokeWidth="1.8" /></svg>, ''],
    ['Проводник', <svg viewBox="0 0 28 24" className="h-6 w-7"><path d="M3 4H10L11 2H20V5H25V21H3Z" fill="#f0d888" stroke="#c8a040" /><path d="M5 7H26V20H5Z" fill="#f8e8a8" stroke="#d0b050" /><path d="M6 3H9V5H6Z" fill="#30a040" /><path d="M13 3H16V5H13Z" fill="#d04030" /><path d="M7 22V14H22V22H19V17H10V22Z" fill="#8cc8e8" stroke="#5898c0" /></svg>, 'active'],
    ['Проигрыватель', <svg viewBox="0 0 24 24" className="size-6"><path d="M6 3L21 4V20L6 21Z" fill="#a8d4ec" stroke="#70a8cc" /><path d="M3 4L16 3V21L3 20Z" fill="#c8e4f4" stroke="#80b4d4" /><circle cx="10" cy="12" r="6.5" fill="#f07818" /><path d="M8 8L14 12L8 16Z" fill="#fff" /></svg>, ''],
    ['Chrome', <svg viewBox="0 0 24 24" className="size-6"><circle cx="12" cy="12" r="11" fill="#f8c820" /><path d="M2.5 6.5A11 11 0 0 1 21.5 6.5L12 7L8 14.5Z" fill="#e04030" /><path d="M2.5 6.5A11 11 0 0 0 11 23L16.5 14.5L8 14.5Z" fill="#30a050" /><circle cx="12" cy="12" r="5.2" fill="#fff" /><circle cx="12" cy="12" r="4" fill="#4080f0" /></svg>, ''],
    ['uTorrent', <svg viewBox="0 0 24 24" className="size-6"><circle cx="12" cy="12" r="11.5" fill="#68b040" /><path d="M5 7L10 15C12 18 15 16 14 12L11 5M14 12C15 16 18 16 20 14M6 9L11 22" fill="none" stroke="#fff" strokeWidth="3" /></svg>, 'active'],
    ['Diamag 2', <svg viewBox="0 0 24 24" className="size-6"><path d="M1 1H23V23H1Z" fill="#0c2890" stroke="#081860" /><path d="M2 13H5L6 10L7.5 15L9.5 5L11 19L13 6L14.5 17L16 10L17.5 14L19 12L22 13" fill="none" stroke="#fff" strokeWidth="1.3" /></svg>, 'current'],
    ['Просмотр фотографий', <svg viewBox="0 0 26 22" className="h-[22px] w-[26px]"><path d="M3 3H23V19H3Z" fill="#70b8e8" /><path d="M3 9C9 5 15 8 23 5V9Z" fill="#e8f4fc" /><path d="M3 10C8 12 15 13 23 10V14H3Z" fill="#286848" /><path d="M3 14C10 12 16 13 23 14V19H3Z" fill="#3090b8" /><path d="M1.5 6V1.5H6M20 1.5H24.5V6M24.5 16V20.5H20M6 20.5H1.5V16" fill="none" stroke="#4888b8" strokeWidth="2" /></svg>, 'active'],
    ['Яндекс', <svg viewBox="0 0 24 24" className="size-6"><circle cx="12" cy="12" r="11.5" fill="#f4f4f4" stroke="#ccc" strokeWidth=".5" /><path d="M6.5 6L12 13L17.5 6M12 12.5V20" fill="none" stroke="#e01818" strokeWidth="2.8" /></svg>, 'active'],
];

const APP_STATE = {
    '': 'border-transparent',
    active: 'border-[#7f9ab8] bg-gradient-to-b from-[#d4e4f4] to-[#b4cfe8] shadow-[inset_0_0_0_1px_#e0edf8]',
    current: 'border-[#7f9ab8] bg-gradient-to-b from-[#f4f9fd] to-[#dceaf6]',
};

function Taskbar() {
    return (
        <div className="flex h-[30px] items-center bg-gradient-to-r from-[#829db9] via-[#b2cfea] via-10% to-[#b2cfea]">
            <button type="button" aria-label="Пуск" className="flex w-[42px] justify-center">
                <svg viewBox="0 0 28 28" className="size-7">
                    <circle cx="14" cy="14" r="13" fill="#2868a0" stroke="#80a8c8" />
                    <path d="M2 11A12.5 12.5 0 0 1 26 11C20 7 8 16 2 11Z" fill="#78b0d8" />
                    <path d="M8 8C10 7 12 7 13.5 8L12.5 13C11 12 9 12 7 13Z" fill="#e86030" />
                    <path d="M14.5 8.5C16 9.5 18 9.5 20.5 8L19.5 13.5C17 15 15 14.5 13.5 13.5Z" fill="#88c030" />
                    <path d="M6.5 14.5C8.5 13.5 10.5 13.5 12.2 14.5L11 20C9.5 19 7.5 19 5.5 20Z" fill="#58a8e8" />
                    <path d="M13.2 15C15 16 17 16.3 19.2 15L18 20.5C16 22 13.5 21.5 12 20.5Z" fill="#f8c828" />
                </svg>
            </button>
            <div className="flex h-full flex-1 gap-[3px]">
                {APPS.map(([name, icon, state]) => (
                    <button type="button" key={name} aria-label={name} className={`flex h-full w-11 items-center justify-center rounded-xs border ${APP_STATE[state]}`}>{icon}</button>
                ))}
            </div>
            <div className="flex h-full items-center gap-2 bg-gradient-to-r from-transparent to-[#89a3bf] to-15% pl-8 font-['Open_Sans',sans-serif] text-[8px] text-white">
                <span className="mr-1">RU</span>
                <Svg size="size-1.5" box="0 0 6 6"><path d="M0 5L3 2L6 5Z" fill="#fff" /></Svg>
                <div className="ml-0.5 flex items-center gap-1.5">
                    <Svg size="size-3" box="0 0 12 12"><path d="M1 8C1 4 5 2 11 2C10 7 7 10 3 9.5C2 11 1.5 11 1 11C2 8 5 6 8 5" stroke="#fff" fill="#5c7088" strokeWidth="1.3" /></Svg>
                    <Svg size="size-3" box="0 0 14 14"><path d="M2 1V13M3 2H9V8H3" stroke="#fff" strokeWidth="1.4" /><circle cx="9.5" cy="9.5" r="4" fill="#e03030" /><path d="M8 8L11 11M11 8L8 11" stroke="#fff" strokeWidth="1.2" /></Svg>
                    <Svg size="size-3" box="0 0 12 12"><path d="M1 3H5V11H1ZM2 1.5H4" stroke="#fff" strokeWidth="1.3" /><path d="M7 1V4M10 1V4M6 4H11V7C11 9 6 9 6 7ZM8.5 8V11H6" stroke="#fff" strokeWidth="1.3" /></Svg>
                    <Svg size="size-3" box="0 0 12 12"><path d="M1 11V9M3.5 11V7.5M6 11V5.5M8.5 11V3.5M11 11V1.5" stroke="#fff" strokeWidth="1.5" /></Svg>
                    <Svg size="size-3" box="0 0 12 12"><path d="M0 4.5H2.5L5.5 2V10L2.5 7.5H0Z" fill="#fff" /><path d="M7 4C8 5 8 7 7 8M9 2.5C11 4.5 11 7.5 9 9.5" stroke="#fff" /></Svg>
                </div>
                <div className="ml-1 text-center leading-[13px]">
                    <div>18:18</div>
                    <div>24.07.2021</div>
                </div>
                <button type="button" aria-label="Показать рабочий стол" className="h-full w-[11px] border-l border-[#5c7894] bg-gradient-to-b from-[#b4c8dc] to-[#8098b4]" />
            </div>
        </div>
    );
}

export default function App() {
    return (
        <div className="min-h-screen bg-[#f0f0f0] font-['Liberation_Sans',Arial,sans-serif] text-black">
            <TitleBar />
            <MenuBar />
            <div className="flex h-4 items-end gap-px">
                {TABS.map((t) => (
                    <button type="button" key={t.label} className={`rounded-t-sm border border-b-0 border-[#a0a0a0] text-[8px] leading-3 whitespace-nowrap ${t.cls}`}>{t.label}</button>
                ))}
            </div>
            <Toolbar />
            <Chart />
            <ScrollRow />
            <ControlPanel />
            <StatusBar />
            <Taskbar />
        </div>
    );
}
